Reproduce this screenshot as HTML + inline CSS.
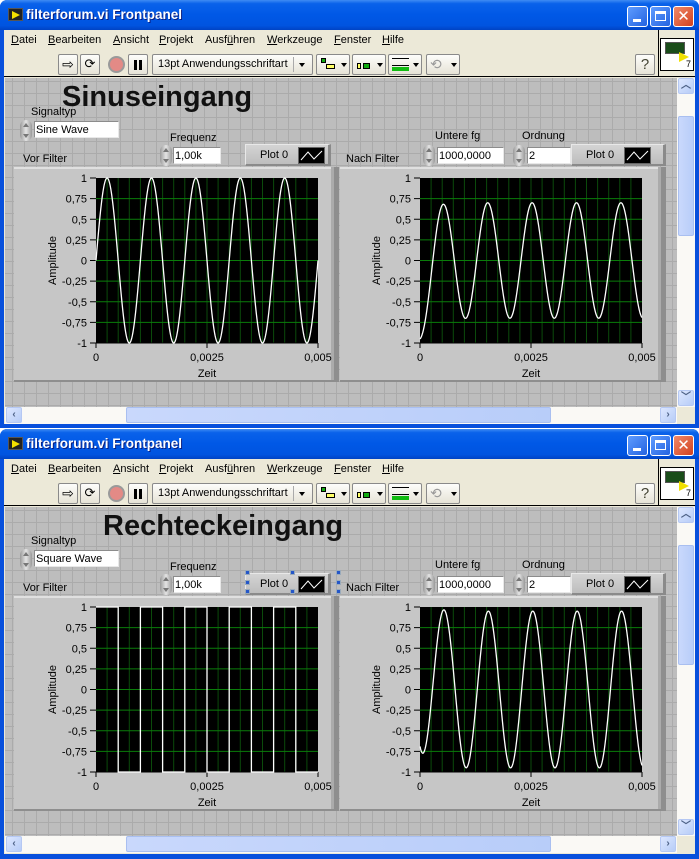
<!DOCTYPE html>
<html><head><meta charset="utf-8">
<style>
*{margin:0;padding:0;box-sizing:border-box}
body{width:699px;height:859px;overflow:hidden;background:#fff;font-family:"Liberation Sans","DejaVu Sans",sans-serif;font-size:11px;color:#000;position:relative}
.win{position:absolute;left:0;width:699px;background:#0850DC;border-radius:7px 7px 0 0;overflow:hidden}
.tb{position:absolute;left:0;top:0;width:699px;height:30px;background:linear-gradient(#3F8CF3 0%,#0A62EA 12%,#0058E6 50%,#0054E0 85%,#0043C4 100%)}
.ttl{position:absolute;left:26px;top:7px;color:#fff;font-weight:bold;font-size:13.5px;text-shadow:1px 1px #0A1E80}
.ico{position:absolute;left:8px;top:8px;width:15px;height:13px;background:#222;border:1px solid #555}
.ico:after{content:"";position:absolute;left:3px;top:2px;border-left:8px solid #F5E000;border-top:4px solid transparent;border-bottom:4px solid transparent}
.wb{position:absolute;top:6px;width:21px;height:21px;border:1px solid #fff;border-radius:3px;background:linear-gradient(135deg,#5F9CFF,#2463E0);}
.wb.cl{background:linear-gradient(135deg,#F08A6A,#D2401E)}
.client{position:absolute;left:4px;top:30px;width:691px;background:#ECE9D8}
.menu{position:absolute;left:0;top:0;height:20px;width:654px}
.menu span{position:absolute;top:4px}
.tool{position:absolute;left:0;top:20px;height:27px;width:691px;border-bottom:1px solid #000}
.btn{position:absolute;top:4px;height:21px;border:1px solid #8a8a8a;border-radius:2px;background:linear-gradient(#FDFDFB,#E6E3D6)}
.panel{position:absolute;left:1px;top:48px;width:672px;height:329px;background-color:#BDBDBD;background-image:linear-gradient(90deg,#ABABAB 1px,transparent 1px),linear-gradient(#ABABAB 1px,transparent 1px);background-size:12px 12px;background-position:7px 3px;overflow:hidden}
.lbl{position:absolute;font-size:11px;white-space:nowrap}
.box{position:absolute;height:17px;background:#fff;border-top:1px solid #8c8c8c;border-left:1px solid #8c8c8c;border-right:1px solid #e8e8e8;border-bottom:1px solid #e8e8e8;font-size:11px;padding:2px 0 0 1px;white-space:nowrap}
.spin{position:absolute;width:12px;height:21px;border-radius:6px;background:linear-gradient(90deg,#9a9a9a,#e4e4e4 50%,#9a9a9a)}
.spin:before{content:"";position:absolute;left:3px;top:3px;border-bottom:4px solid #777;border-left:3px solid transparent;border-right:3px solid transparent}
.spin:after{content:"";position:absolute;left:3px;bottom:3px;border-top:4px solid #777;border-left:3px solid transparent;border-right:3px solid transparent}
.leg{position:absolute;height:22px;background:linear-gradient(#D4D4D4,#BDBDBD);border:1px solid #e8e8e8;border-right:3px solid #8a8a8a;border-bottom:2px solid #8a8a8a}
.sw{position:absolute;top:2px;width:27px;height:17px;background:#000;border:1px solid #666}
.big{position:absolute;font-weight:bold;font-size:29px;color:#111;white-space:nowrap}
.vs{position:absolute;left:673px;top:48px;width:18px;height:329px;background:#FAF9F5}
.hs{position:absolute;left:1px;top:377px;width:672px;height:17px;background:#FAF9F5}
.grip{position:absolute;left:673px;top:377px;width:18px;height:17px;background:#ECE9D8}
.sb{position:absolute;width:16px;height:16px;border:1px solid #B5C8F3;border-radius:2px;background:linear-gradient(135deg,#DCE7FF,#B7CCF7);color:#4D6185;font-size:10px;font-weight:bold;text-align:center;line-height:14px}
.th{position:absolute;border:1px solid #A9BFF0;border-radius:2px;background:linear-gradient(90deg,#C9D8FC,#B8CDF9)}
.h{position:absolute;width:5px;height:5px;background:#2456C8;border:1px solid #9ab}
svg text{font-family:"Liberation Sans","DejaVu Sans",sans-serif;font-size:11px}
</style></head><body>

<!-- WINDOW 1 -->
<div class="win" style="top:0;height:428px">
 <div class="tb"><div class="ico"></div><div class="ttl">filterforum.vi Frontpanel</div>
  <div class="wb" style="left:627px"><div style="position:absolute;left:5px;top:12px;width:8px;height:3px;background:#fff"></div></div>
  <div class="wb" style="left:650px"><div style="position:absolute;left:4px;top:4px;width:11px;height:10px;border:1px solid #fff;border-top:3px solid #fff"></div></div>
  <div class="wb cl" style="left:673px;color:#fff;font-weight:bold;font-size:15px;text-align:center;line-height:19px">✕</div>
 </div>
 <div class="client" style="height:394px">
  <div class="menu">
   <span style="left:7px"><u>D</u>atei</span><span style="left:44px"><u>B</u>earbeiten</span><span style="left:109px"><u>A</u>nsicht</span><span style="left:155px"><u>P</u>rojekt</span><span style="left:201px">Ausf<u>ü</u>hren</span><span style="left:263px"><u>W</u>erkzeuge</span><span style="left:330px"><u>F</u>enster</span><span style="left:378px"><u>H</u>ilfe</span>
  </div>
  <div style="position:absolute;left:654px;top:0;width:1px;height:47px;background:#000"></div>
  <div style="position:absolute;left:656px;top:8px;width:34px;height:33px;background:#fff;border:1px solid #000"><div style="position:absolute;left:4px;top:3px;width:20px;height:12px;background:#1a4d1a;border:1px solid #555"></div><div style="position:absolute;left:18px;top:13px;border-left:10px solid #F0E000;border-top:5px solid transparent;border-bottom:5px solid transparent"></div><div style="position:absolute;left:25px;top:20px;font-size:9px">7</div></div>
  <div class="tool">
   <div class="btn" style="left:54px;width:20px;text-align:center;font-size:14px;line-height:18px">⇨</div>
   <div class="btn" style="left:76px;width:20px;text-align:center;font-size:13px;line-height:18px">⟳</div>
   <div style="position:absolute;left:104px;top:6px;width:17px;height:17px;border-radius:50%;background:#E38A86;border:2px solid #9a9a9a"></div>
   <div class="btn" style="left:124px;width:20px"><div style="position:absolute;left:5px;top:5px;width:3px;height:10px;background:#000"></div><div style="position:absolute;left:10px;top:5px;width:3px;height:10px;background:#000"></div></div>
   <div class="btn" style="left:148px;width:161px;padding:3px 0 0 5px;font-size:11px">13pt Anwendungsschriftart<div style="position:absolute;left:140px;top:2px;width:1px;height:15px;background:#aaa"></div><div style="position:absolute;left:146px;top:8px;border-top:4px solid #000;border-left:3px solid transparent;border-right:3px solid transparent"></div></div>
   <div class="btn" style="left:312px;width:34px"><div style="position:absolute;left:4px;top:3px;width:5px;height:5px;background:#1a1;border:1px solid #000"></div><div style="position:absolute;left:9px;top:9px;width:9px;height:5px;background:#ff6;border:1px solid #000"></div><div style="position:absolute;left:24px;top:8px;border-top:4px solid #000;border-left:3px solid transparent;border-right:3px solid transparent"></div></div>
   <div class="btn" style="left:348px;width:34px"><div style="position:absolute;left:4px;top:8px;width:4px;height:6px;background:#ff6;border:1px solid #000"></div><div style="position:absolute;left:10px;top:8px;width:7px;height:6px;background:#1a1;border:1px solid #000"></div><div style="position:absolute;left:24px;top:8px;border-top:4px solid #000;border-left:3px solid transparent;border-right:3px solid transparent"></div></div>
   <div class="btn" style="left:384px;width:34px"><div style="position:absolute;left:3px;top:3px;width:17px;height:8px;border-top:1px solid #000;border-bottom:1px solid #000"></div><div style="position:absolute;left:3px;top:12px;width:17px;height:4px;background:#1b1"></div><div style="position:absolute;left:24px;top:8px;border-top:4px solid #000;border-left:3px solid transparent;border-right:3px solid transparent"></div></div>
   <div class="btn" style="left:422px;width:34px;color:#999;font-size:14px;line-height:18px;padding-left:3px">⟲<div style="position:absolute;left:24px;top:8px;border-top:4px solid #000;border-left:3px solid transparent;border-right:3px solid transparent"></div></div>
   <div class="btn" style="left:631px;width:20px;text-align:center;font-size:15px;line-height:19px;color:#443">?</div>
  </div>
  <div class="panel">
   <div class="big" style="left:57px;top:3px">Sinuseingang</div>
   <div class="lbl" style="left:26px;top:28px">Signaltyp</div>
   <div class="spin" style="left:15px;top:42px"></div>
   <div class="box" style="left:29px;top:43px;width:85px">Sine Wave</div>
   <div class="lbl" style="left:165px;top:54px">Frequenz</div>
   <div class="spin" style="left:155px;top:67px"></div>
   <div class="box" style="left:168px;top:69px;width:48px">1,00k</div>
   <div class="leg" style="left:240px;top:66px;width:86px"><span class="lbl" style="left:14px;top:4px">Plot 0</span><div class="sw" style="left:52px"><svg width="25" height="15"><polyline points="2,12 9,4 15,11 23,3" fill="none" stroke="#fff"/></svg></div></div>
   <div class="lbl" style="left:18px;top:75px">Vor Filter</div>
   <div class="lbl" style="left:341px;top:75px">Nach Filter</div>
   <div class="lbl" style="left:430px;top:52px">Untere fg</div>
   <div class="spin" style="left:418px;top:67px"></div>
   <div class="box" style="left:432px;top:69px;width:67px">1000,0000</div>
   <div class="lbl" style="left:517px;top:52px">Ordnung</div>
   <div class="spin" style="left:508px;top:67px"></div>
   <div class="box" style="left:522px;top:69px;width:44px">2</div>
   <div class="leg" style="left:566px;top:66px;width:95px"><span class="lbl" style="left:14px;top:4px">Plot 0</span><div class="sw" style="left:52px"><svg width="25" height="15"><polyline points="2,12 9,4 15,11 23,3" fill="none" stroke="#fff"/></svg></div></div>
  </div>
  <div class="vs"><div class="sb" style="left:1px;top:0">︿</div><div class="th" style="left:1px;top:38px;width:16px;height:120px"></div><div class="sb" style="left:1px;top:312px">﹀</div></div>
  <div class="hs"><div class="sb" style="left:1px;top:0">‹</div><div class="th" style="left:121px;top:0;width:425px;height:16px"></div><div class="sb" style="left:655px;top:0">›</div></div>
  <div class="grip"></div>
 </div>
 <svg id="s1" style="position:absolute;left:0;top:0" width="699" height="428"></svg>
</div>

<!-- WINDOW 2 -->
<div class="win" style="top:429px;height:430px">
 <div class="tb"><div class="ico"></div><div class="ttl">filterforum.vi Frontpanel</div>
  <div class="wb" style="left:627px"><div style="position:absolute;left:5px;top:12px;width:8px;height:3px;background:#fff"></div></div>
  <div class="wb" style="left:650px"><div style="position:absolute;left:4px;top:4px;width:11px;height:10px;border:1px solid #fff;border-top:3px solid #fff"></div></div>
  <div class="wb cl" style="left:673px;color:#fff;font-weight:bold;font-size:15px;text-align:center;line-height:19px">✕</div>
 </div>
 <div class="client" style="height:395px">
  <div class="menu">
   <span style="left:7px"><u>D</u>atei</span><span style="left:44px"><u>B</u>earbeiten</span><span style="left:109px"><u>A</u>nsicht</span><span style="left:155px"><u>P</u>rojekt</span><span style="left:201px">Ausf<u>ü</u>hren</span><span style="left:263px"><u>W</u>erkzeuge</span><span style="left:330px"><u>F</u>enster</span><span style="left:378px"><u>H</u>ilfe</span>
  </div>
  <div style="position:absolute;left:654px;top:0;width:1px;height:47px;background:#000"></div>
  <div style="position:absolute;left:656px;top:8px;width:34px;height:33px;background:#fff;border:1px solid #000"><div style="position:absolute;left:4px;top:3px;width:20px;height:12px;background:#1a4d1a;border:1px solid #555"></div><div style="position:absolute;left:18px;top:13px;border-left:10px solid #F0E000;border-top:5px solid transparent;border-bottom:5px solid transparent"></div><div style="position:absolute;left:25px;top:20px;font-size:9px">7</div></div>
  <div class="tool">
   <div class="btn" style="left:54px;width:20px;text-align:center;font-size:14px;line-height:18px">⇨</div>
   <div class="btn" style="left:76px;width:20px;text-align:center;font-size:13px;line-height:18px">⟳</div>
   <div style="position:absolute;left:104px;top:6px;width:17px;height:17px;border-radius:50%;background:#E38A86;border:2px solid #9a9a9a"></div>
   <div class="btn" style="left:124px;width:20px"><div style="position:absolute;left:5px;top:5px;width:3px;height:10px;background:#000"></div><div style="position:absolute;left:10px;top:5px;width:3px;height:10px;background:#000"></div></div>
   <div class="btn" style="left:148px;width:161px;padding:3px 0 0 5px;font-size:11px">13pt Anwendungsschriftart<div style="position:absolute;left:140px;top:2px;width:1px;height:15px;background:#aaa"></div><div style="position:absolute;left:146px;top:8px;border-top:4px solid #000;border-left:3px solid transparent;border-right:3px solid transparent"></div></div>
   <div class="btn" style="left:312px;width:34px"><div style="position:absolute;left:4px;top:3px;width:5px;height:5px;background:#1a1;border:1px solid #000"></div><div style="position:absolute;left:9px;top:9px;width:9px;height:5px;background:#ff6;border:1px solid #000"></div><div style="position:absolute;left:24px;top:8px;border-top:4px solid #000;border-left:3px solid transparent;border-right:3px solid transparent"></div></div>
   <div class="btn" style="left:348px;width:34px"><div style="position:absolute;left:4px;top:8px;width:4px;height:6px;background:#ff6;border:1px solid #000"></div><div style="position:absolute;left:10px;top:8px;width:7px;height:6px;background:#1a1;border:1px solid #000"></div><div style="position:absolute;left:24px;top:8px;border-top:4px solid #000;border-left:3px solid transparent;border-right:3px solid transparent"></div></div>
   <div class="btn" style="left:384px;width:34px"><div style="position:absolute;left:3px;top:3px;width:17px;height:8px;border-top:1px solid #000;border-bottom:1px solid #000"></div><div style="position:absolute;left:3px;top:12px;width:17px;height:4px;background:#1b1"></div><div style="position:absolute;left:24px;top:8px;border-top:4px solid #000;border-left:3px solid transparent;border-right:3px solid transparent"></div></div>
   <div class="btn" style="left:422px;width:34px;color:#999;font-size:14px;line-height:18px;padding-left:3px">⟲<div style="position:absolute;left:24px;top:8px;border-top:4px solid #000;border-left:3px solid transparent;border-right:3px solid transparent"></div></div>
   <div class="btn" style="left:631px;width:20px;text-align:center;font-size:15px;line-height:19px;color:#443">?</div>
  </div>
  <div class="panel">
   <div class="big" style="left:98px;top:3px">Rechteckeingang</div>
   <div class="lbl" style="left:26px;top:28px">Signaltyp</div>
   <div class="spin" style="left:15px;top:42px"></div>
   <div class="box" style="left:29px;top:43px;width:85px">Square Wave</div>
   <div class="lbl" style="left:165px;top:54px">Frequenz</div>
   <div class="spin" style="left:155px;top:67px"></div>
   <div class="box" style="left:168px;top:69px;width:48px">1,00k</div>
   <div class="leg" style="left:240px;top:66px;width:86px"><span class="lbl" style="left:14px;top:4px">Plot 0</span><div class="sw" style="left:52px"><svg width="25" height="15"><polyline points="2,12 9,4 15,11 23,3" fill="none" stroke="#fff"/></svg></div></div>
   <div class="h" style="left:240px;top:63px"></div><div class="h" style="left:285px;top:63px"></div><div class="h" style="left:331px;top:63px"></div>
   <div class="h" style="left:240px;top:73px"></div><div class="h" style="left:331px;top:73px"></div>
   <div class="h" style="left:240px;top:82px"></div><div class="h" style="left:285px;top:82px"></div><div class="h" style="left:331px;top:82px"></div>
   <div class="lbl" style="left:18px;top:75px">Vor Filter</div>
   <div class="lbl" style="left:341px;top:75px">Nach Filter</div>
   <div class="lbl" style="left:430px;top:52px">Untere fg</div>
   <div class="spin" style="left:418px;top:67px"></div>
   <div class="box" style="left:432px;top:69px;width:67px">1000,0000</div>
   <div class="lbl" style="left:517px;top:52px">Ordnung</div>
   <div class="spin" style="left:508px;top:67px"></div>
   <div class="box" style="left:522px;top:69px;width:44px">2</div>
   <div class="leg" style="left:566px;top:66px;width:95px"><span class="lbl" style="left:14px;top:4px">Plot 0</span><div class="sw" style="left:52px"><svg width="25" height="15"><polyline points="2,12 9,4 15,11 23,3" fill="none" stroke="#fff"/></svg></div></div>
  </div>
  <div class="vs"><div class="sb" style="left:1px;top:0">︿</div><div class="th" style="left:1px;top:38px;width:16px;height:120px"></div><div class="sb" style="left:1px;top:312px">﹀</div></div>
  <div class="hs"><div class="sb" style="left:1px;top:0">‹</div><div class="th" style="left:121px;top:0;width:425px;height:16px"></div><div class="sb" style="left:655px;top:0">›</div></div>
  <div class="grip"></div>
 </div>
 <svg id="s2" style="position:absolute;left:0;top:0" width="699" height="430"></svg>
</div>

<script>
var NS="http://www.w3.org/2000/svg";
function el(svg,tag,a,txt){var e=document.createElementNS(NS,tag);for(var k in a)e.setAttribute(k,a[k]);if(txt!==undefined)e.textContent=txt;svg.appendChild(e);return e;}
var ylab=["1","0,75","0,5","0,25","0","-0,25","-0,5","-0,75","-1"];
function graph(svg,fx,fw,px,f,square){
 var py=178,pw=222,ph=165;
 el(svg,"rect",{x:fx,y:167,width:fw,height:215,fill:"#C6C6C6"});
 el(svg,"rect",{x:fx,y:167,width:fw,height:2,fill:"#E0E0E0"});
 el(svg,"rect",{x:fx+fw-5,y:167,width:5,height:215,fill:"#8E8E8E"});
 el(svg,"rect",{x:fx+fw-8,y:167,width:3,height:215,fill:"#ABABAB"});
 el(svg,"rect",{x:fx,y:380,width:fw,height:2,fill:"#8E8E8E"});
 el(svg,"rect",{x:px,y:py,width:pw,height:ph,fill:"#000"});
 for(var i=1;i<20;i++){var x=px+pw*i/20;el(svg,"line",{x1:x,y1:py,x2:x,y2:py+ph,stroke:"#0B4A0B","stroke-width":1});}
 for(var j=1;j<8;j++){var y=py+ph*j/8;el(svg,"line",{x1:px,y1:y,x2:px+pw,y2:y,stroke:"#0A7D0A","stroke-width":1});}
 for(var j=0;j<9;j++){var y=py+ph*j/8;el(svg,"text",{x:px-9,y:y+4,"text-anchor":"end"},ylab[j]);el(svg,"line",{x1:px-6,y1:y,x2:px,y2:y,stroke:"#000"});}
 el(svg,"line",{x1:px,y1:py+ph,x2:px+pw,y2:py+ph,stroke:"#000"});
 var xl=["0","0,0025","0,005"];
 for(var k=0;k<3;k++){var x=px+pw*k/2;el(svg,"line",{x1:x,y1:py+ph,x2:x,y2:py+ph+5,stroke:"#000"});el(svg,"text",{x:x,y:361,"text-anchor":"middle"},xl[k]);}
 el(svg,"text",{x:px+pw/2,y:377,"text-anchor":"middle"},"Zeit");
 el(svg,"text",{x:0,y:0,"text-anchor":"middle",transform:"translate("+(px-40)+","+(py+ph/2)+") rotate(-90)"},"Amplitude");
 var pts=[];
 function Y(v){return py+(1-v)/2*ph;}
 if(square){
  for(var s=0;s<10;s++){var v=(s%2==0)?1:-1;var x0=px+pw*s/10,x1=px+pw*(s+1)/10;pts.push(x0+","+Y(v));pts.push(x1+","+Y(v));}
 }else{
  for(var i=0;i<=600;i++){var t=i/600;pts.push((px+pw*t).toFixed(2)+","+Y(f(t)).toFixed(2));}
 }
 el(svg,"polyline",{points:pts.join(" "),fill:"none",stroke:"#fff","stroke-width":1.3});
}
var s1=document.getElementById("s1"),s2=document.getElementById("s2");
var W=2*Math.PI*5;
graph(s1,14,325,96,function(t){return Math.sin(W*t);});
graph(s1,340,326,420,function(t){return 0.7*Math.sin(W*(t-0.055))-0.26*Math.exp(-t/0.04);});
graph(s2,14,325,96,null,true);
graph(s2,340,326,420,function(t){return 0.95*Math.sin(W*(t-0.058))+0.23*Math.exp(-t/0.04);});
</script>
</body></html>
